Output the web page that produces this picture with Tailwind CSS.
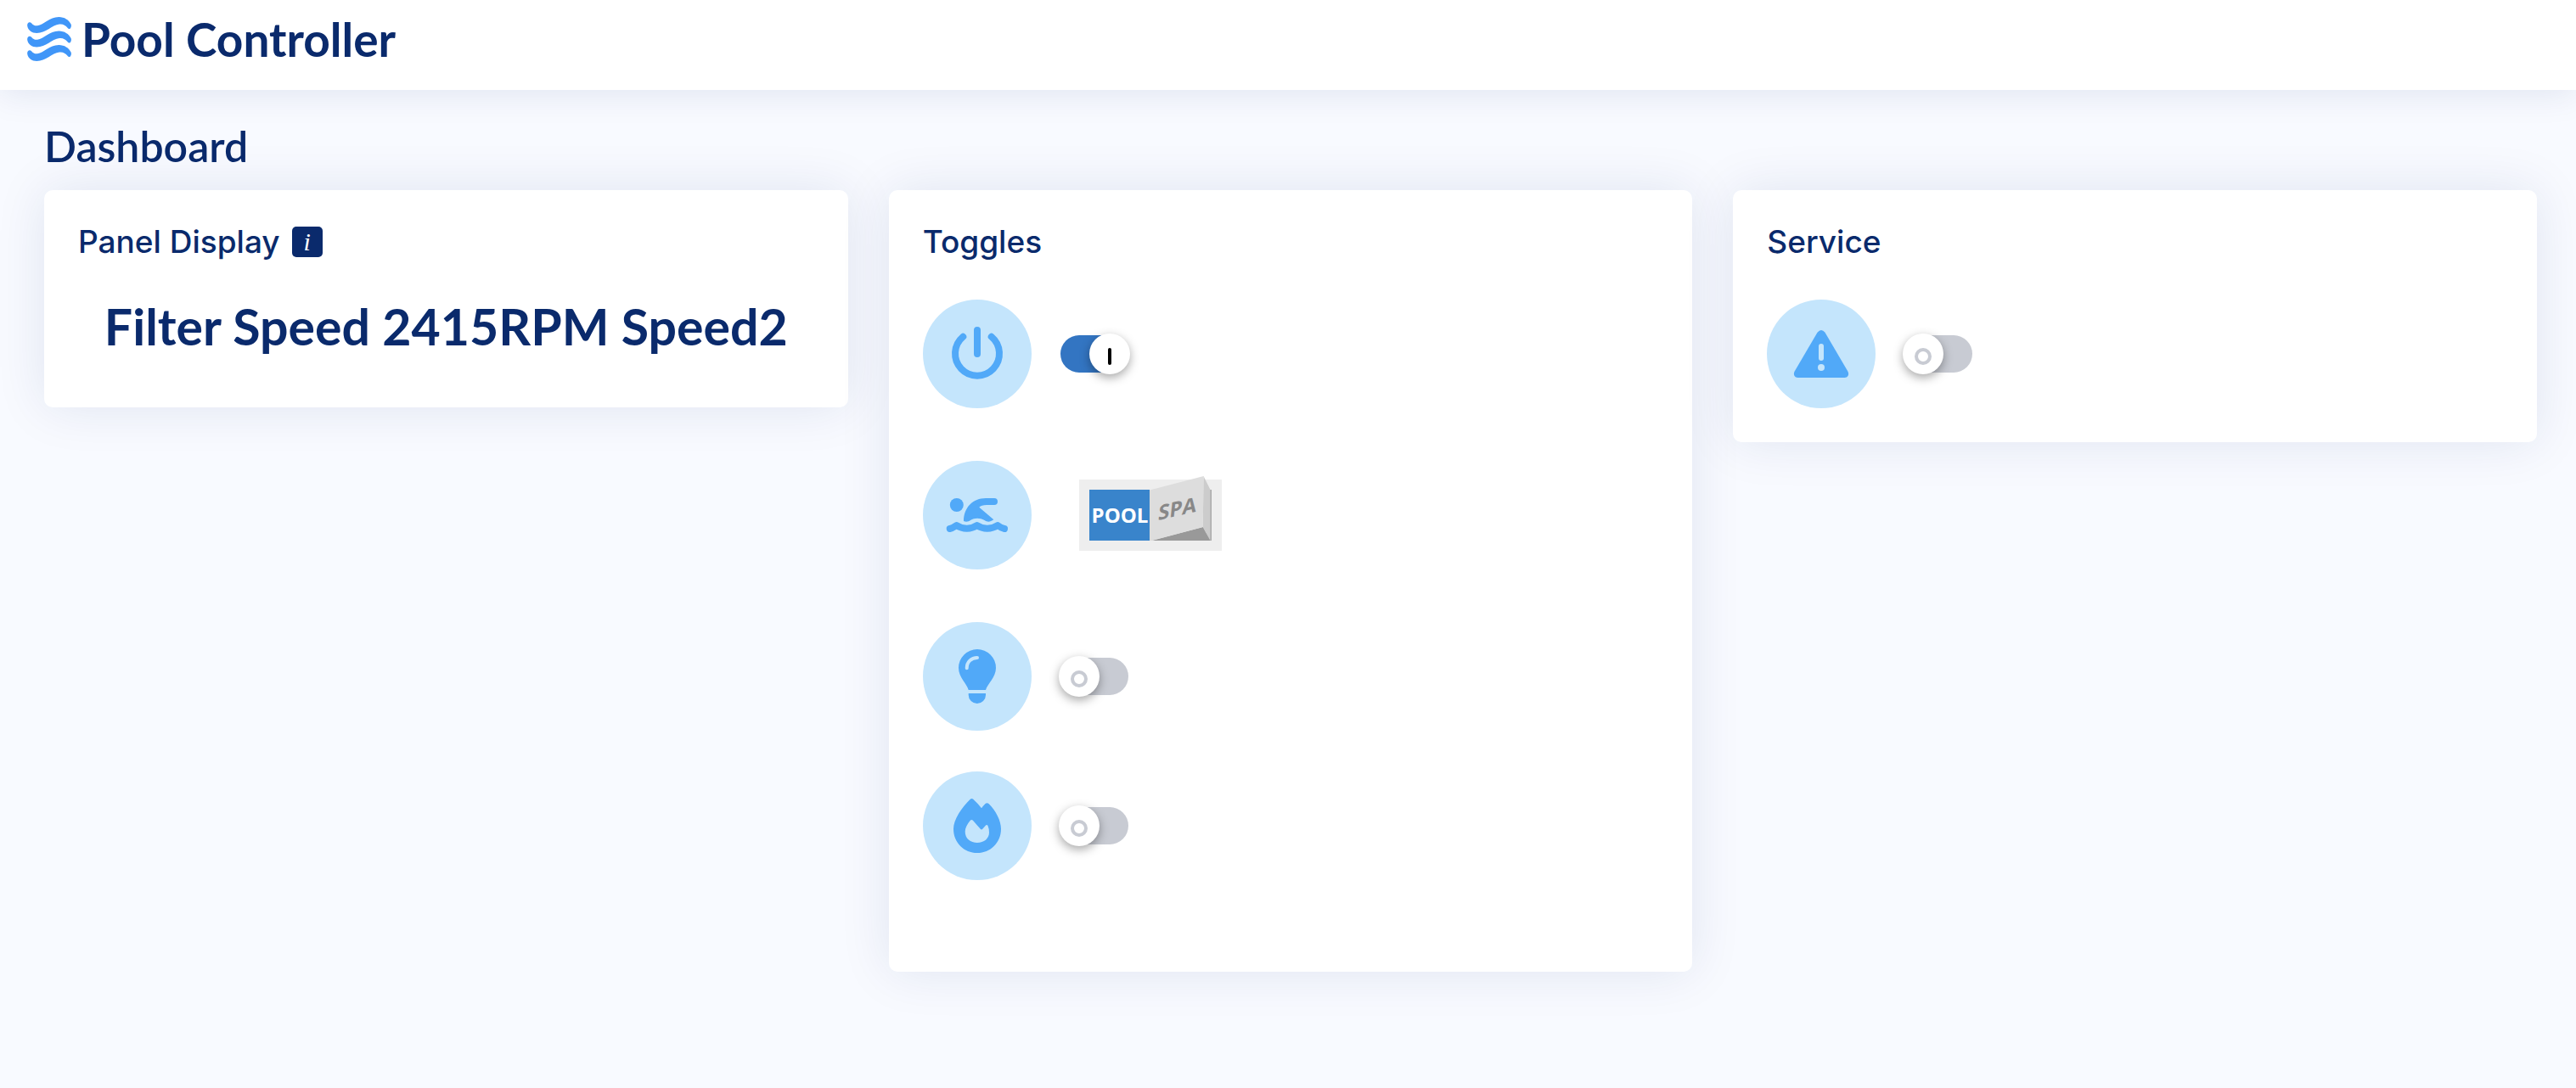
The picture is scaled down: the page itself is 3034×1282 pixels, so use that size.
<!DOCTYPE html>
<html lang="en">
<head>
<meta charset="utf-8">
<meta name="viewport" content="width=device-width, initial-scale=1">
<title>Pool Controller</title>
<script src="https://cdn.jsdelivr.net/npm/@tailwindcss/browser@4"></script>
</head>
<body class="min-h-screen bg-[#f8faff] font-['Lato',sans-serif] text-[#0a2a6c]">

<header class="relative z-10 bg-white px-8 pt-5 pb-[34px] shadow-[0_4px_40px_rgba(1,41,112,0.1)]">
  <a href="#" class="flex w-fit items-center gap-3">
    <svg class="size-[52px]" viewBox="0 0 52 52" fill="#4096f8" aria-hidden="true">
      <defs>
        <path id="wave" d="M.3 11C-.6 6.500 3 4.700 5.300 7.500C7 9.800 9.500 10.700 12 10.200C20 9.200 26 0 37.300 0C44 0 49 3.500 51.600 8.500C52.200 10 52 12 51 13.200C50 14.500 48.600 14.300 47.500 12.800C45.200 9.600 42 8 38 8.500C29 9.500 22 19 11.300 19C5.500 19 1.200 15.500 .3 11Z"/>
      </defs>
      <use href="#wave"/>
      <use href="#wave" y="16.500"/>
      <use href="#wave" y="33"/>
    </svg>
    <span class="text-[55px] leading-[50px] font-bold">Pool Controller</span>
  </a>
</header>

<main class="pt-[38px] pr-[46px] pb-20 pl-[52px]">
  <h1 class="mb-6 text-[50px] leading-[56px] font-semibold">Dashboard</h1>

  <div class="grid grid-cols-3 items-start gap-12">
    <section class="rounded-[10px] bg-white p-10 pb-[63px] shadow-[0_0_60px_rgba(1,41,112,0.1)]">
      <h2 class="mb-[47px] flex items-center gap-3.5 font-['Inter',sans-serif] text-[37px] leading-[42px] font-medium">Panel Display
        <button type="button" aria-label="Panel display information" class="flex size-9 items-center justify-center rounded-[5px] bg-[#0a2a6c] font-['Liberation_Serif',serif] text-[30px] leading-none font-normal text-white italic">i</button>
      </h2>
      <p class="text-center text-[59px] leading-[64px] font-bold">Filter Speed 2415RPM Speed2</p>
    </section>

    <section class="rounded-[10px] bg-white p-10 pb-[108px] shadow-[0_0_60px_rgba(1,41,112,0.1)]">
      <h2 class="mb-[47px] font-['Inter',sans-serif] text-[37px] leading-[42px] font-medium">Toggles</h2>
      <div class="flex flex-col">
        <div class="mb-[62px] flex items-center gap-[34px]">
          <svg class="size-32 rounded-full bg-[#c4e5fc]" viewBox="0 0 128 128" fill="none" stroke="#51a9f8" stroke-width="8" stroke-linecap="round" aria-hidden="true">
            <path d="M64 36V64M47.300 43.700A26 26 0 1 0 80.700 43.700"/>
          </svg>
          <label class="relative flex">
            <input type="checkbox" role="switch" aria-label="Power" checked class="h-11 w-20 appearance-none rounded-full bg-[#3375c2]">
            <span class="absolute -top-0.5 -right-0.5 flex size-12 items-center justify-center rounded-full bg-white pt-1.5 shadow-[0_4px_12px_rgba(0,0,0,0.35)]"><span class="h-5 w-1 rounded-sm bg-black"></span></span>
          </label>
        </div>

        <div class="mb-[62px] flex items-center gap-14">
          <svg class="size-32 rounded-full bg-[#c4e5fc]" viewBox="0 0 128 128" fill="#51a9f8" aria-hidden="true">
            <circle cx="39.800" cy="52" r="8"/>
            <path d="M48 71C48 55 59 44 74 44H84A4 4 0 0 1 84 52H75C71 52 68 53 66.300 54.700L83.300 69.300C79 72.300 76 72.300 72.500 70C67 67 61 67 56 70C54 71.500 51 72.300 48 71Z"/>
            <path d="M31.700 80C35 79.500 37 77.800 39.700 76C47 81 56.500 81 63.700 76C71 81 80.500 81 88 76C90.500 78 93 79.500 96 80" fill="none" stroke="#51a9f8" stroke-width="8" stroke-linecap="round" stroke-linejoin="round"/>
          </svg>
          <label class="flex">
            <input type="checkbox" role="switch" aria-label="Pool or spa" class="sr-only">
            <svg class="h-[84px] w-[168px] overflow-visible bg-[#eee]" viewBox="0 0 168 84" font-family="'Open Sans', sans-serif" font-size="24" font-weight="700" text-anchor="middle">
              <path fill="#3984cb" d="M12 12H83V72H12Z"/>
              <path fill="#aaa" d="M150 12H156V72H150Z"/>
              <path fill="#999" d="M85 72L146 56L154.500 72Z"/>
              <path fill="#ccc" d="M146.500 -4L154.500 12V72L145.700 56Z"/>
              <path fill="#ddd" d="M83 12.500L146.700 -4L145.700 56L86 72H83Z"/>
              <text x="48" y="51" fill="#fff">POOL</text>
              <text transform="translate(115 43) skewY(-13) skewX(-6)" fill="#888">SPA</text>
            </svg>
          </label>
        </div>

        <div class="mb-12 flex items-center gap-[34px]">
          <svg class="size-32 rounded-full bg-[#c4e5fc]" viewBox="0 0 128 128" fill="#51a9f8" aria-hidden="true">
            <path d="M53.700 80C52 73 42 65 42 54A22 22 0 0 1 86 54C86 65 76 73 74 80ZM53.700 84H74V86A10.150 10 0 0 1 53.700 86Z"/>
            <path d="M51.700 54.300C51.700 47 57 42 64 42" fill="none" stroke="#c4e5fc" stroke-width="4" stroke-linecap="round"/>
          </svg>
          <label class="relative flex">
            <input type="checkbox" role="switch" aria-label="Lights" class="h-11 w-20 appearance-none rounded-full bg-[#c8cbd3]">
            <span class="absolute -top-0.5 -left-0.5 flex size-12 items-center justify-center rounded-full bg-white pt-1.5 shadow-[0_4px_12px_rgba(0,0,0,0.35)]"><span class="size-5 rounded-full border-4 border-[#c8cbd3]"></span></span>
          </label>
        </div>

        <div class="flex items-center gap-[34px]">
          <svg class="size-32 rounded-full bg-[#c4e5fc]" viewBox="0 0 128 128" fill="#51a9f8" aria-hidden="true">
            <path fill-rule="evenodd" d="M56 32.500Q57.500 31.500 59 32.500Q64.500 37.500 69 43.300Q71 40.500 73.500 38Q75.500 36.300 77.500 38C86 46 92 58.500 92 67.700C92 84 79.500 96 64 96S36 84 36 67.700C36 57 45.500 42.500 56 32.500ZM56 57.500C52 62 49.700 67 49.700 71C49.700 79 56 84 64 84S78 79 78 72Q78 67.500 76.500 64Q75.500 62.300 74 63.500L70.300 67.800Q69 69 67.700 67.800L58.700 57.500Q57.300 56.300 56 57.500Z"/>
          </svg>
          <label class="relative flex">
            <input type="checkbox" role="switch" aria-label="Heater" class="h-11 w-20 appearance-none rounded-full bg-[#c8cbd3]">
            <span class="absolute -top-0.5 -left-0.5 flex size-12 items-center justify-center rounded-full bg-white pt-1.5 shadow-[0_4px_12px_rgba(0,0,0,0.35)]"><span class="size-5 rounded-full border-4 border-[#c8cbd3]"></span></span>
          </label>
        </div>
      </div>
    </section>

    <section class="rounded-[10px] bg-white p-10 shadow-[0_0_60px_rgba(1,41,112,0.1)]">
      <h2 class="mb-[47px] font-['Inter',sans-serif] text-[37px] leading-[42px] font-medium">Service</h2>
      <div class="flex items-center gap-[34px]">
        <svg class="size-32 rounded-full bg-[#c4e5fc]" viewBox="0 0 128 128" fill="#51a9f8" aria-hidden="true">
          <path d="M59.500 38.700Q64 33.500 68.500 38.700L95.300 84.500C97.500 88.500 95 92 91.500 92H36.500C33 92 30.500 88.500 32.700 84.500Z"/>
          <path d="M64 55V69" stroke="#c4e5fc" stroke-width="6" stroke-linecap="round"/>
          <circle cx="64" cy="80" r="4" fill="#c4e5fc"/>
        </svg>
        <label class="relative flex">
          <input type="checkbox" role="switch" aria-label="Service mode" class="h-11 w-20 appearance-none rounded-full bg-[#c8cbd3]">
          <span class="absolute -top-0.5 -left-0.5 flex size-12 items-center justify-center rounded-full bg-white pt-1.5 shadow-[0_4px_12px_rgba(0,0,0,0.35)]"><span class="size-5 rounded-full border-4 border-[#c8cbd3]"></span></span>
        </label>
      </div>
    </section>
  </div>
</main>
</body>
</html>
